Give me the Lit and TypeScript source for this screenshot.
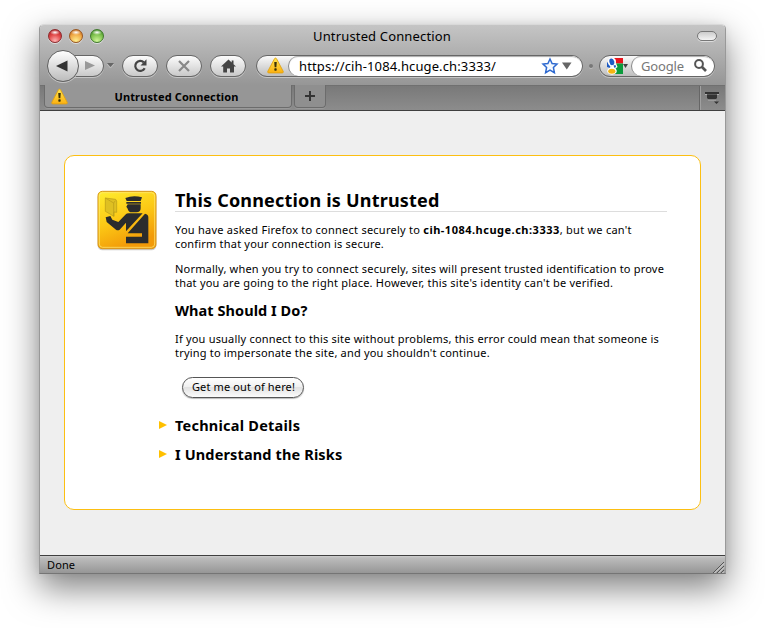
import { LitElement, html, css, svg } from "lit";
import { customElement } from "lit/decorators.js";

const warning = svg`
  <defs><linearGradient id="w" x1="0" y1="0" x2="0" y2="1"><stop offset="0" stop-color="#ffe650"/><stop offset="1" stop-color="#fbb010"/></linearGradient></defs>
  <path d="M8 1 Q8.6 1 9 1.7 L15.2 13.4 Q15.7 15 14.3 15 H1.7 Q.3 15 .8 13.4 L7 1.7 Q7.4 1 8 1Z" fill="url(#w)" stroke="#e0a010" stroke-width=".8"/>
  <path d="M6.800 4.6h2.400l-.4 5h-1.600z" fill="#3a3006"/><rect x="6.900" y="10.700" width="2.200" height="2.200" rx=".6" fill="#3a3006"/>`;

@customElement("app-root")
export class AppRoot extends LitElement {
  static styles = css`
    :host { display: block; width: 765px; height: 628px; background: #fff; overflow: hidden; box-sizing: border-box; padding: 24px 39px 0; font-family: "Noto Sans", "Open Sans", sans-serif; color: #000; }
    * { box-sizing: border-box; }
    svg { display: block; flex: none; overflow: visible; }
    .window { width: 687px; height: 550px; border: 1px solid #999; border-top-color: #d9d9d9; border-bottom-color: #757575; border-radius: 5px 5px 0 0; background: #efefef; display: flex; flex-direction: column; box-shadow: 0 14px 34px rgba(0,0,0,.5), 0 0 8px rgba(0,0,0,.06); }
    .chrome { height: 60px; background: linear-gradient(#c5c5c5, #969696); border-radius: 4px 4px 0 0; flex: none; }
    .title { height: 24px; display: grid; grid-template-columns: 1fr auto 1fr; align-items: center; padding: 0 8px; }
    .lights { display: flex; gap: 7px; margin-top: -2px; }
    .light { width: 14px; height: 14px; border-radius: 50%; border: 1px solid; box-shadow: 0 1px 0 #ddd; }
    .red { background: radial-gradient(ellipse 5px 2.500px at 50% 20%, #fff, transparent), radial-gradient(circle at 50% 90%, #ffb3b3 0, #e34b4b 50%, #b01c22 90%); border-color: #8c2a2d; }
    .amber { background: radial-gradient(ellipse 5px 2.500px at 50% 20%, #fff, transparent), radial-gradient(circle at 50% 90%, #fff090 0, #f0a845 55%, #c0661a 90%); border-color: #99561f; }
    .green { background: radial-gradient(ellipse 5px 2.500px at 50% 20%, #fff, transparent), radial-gradient(circle at 50% 90%, #d0f79a 0, #7cc04c 55%, #3f8a24 90%); border-color: #3f7a2b; }
    .caption { font-size: 13px; line-height: 20px; margin: -3px 0 0 -1px; white-space: nowrap; letter-spacing: .15px; }
    .lozenge { justify-self: end; width: 20px; height: 10px; margin-top: -2px; border: 1px solid #777; border-radius: 5px; background: linear-gradient(#ccc, #f4f4f4); box-shadow: 0 1px 0 #ddd; }
    .toolbar { height: 33px; display: flex; align-items: center; padding-left: 7px; }
    .pill { height: 22px; width: 36px; border: 1px solid #666; border-radius: 11px; background: linear-gradient(#fcfcfc, #c9c9c9); box-shadow: 0 1px 0 #c4c4c4; display: flex; align-items: center; justify-content: center; margin-right: 8px; flex: none; }
    .back { width: 32px; height: 32px; border: 1px solid #606060; border-radius: 50%; background: linear-gradient(#fff, #bcbcbc); box-shadow: 0 1px 0 #c4c4c4; z-index: 1; flex: none; display: flex; align-items: center; justify-content: center; }
    .back svg { margin-right: 3px; }
    .forward { width: 31px; margin: 0 3px 0 -6px; border-radius: 0 11px 11px 0; }
    .forward svg { margin-left: 3px; }
    .drop { margin-right: 8px; }
    .field { height: 22px; border: 1px solid #666; border-radius: 11px; background: linear-gradient(#fafafa, #bdbdbd); display: flex; align-items: center; box-shadow: 0 1px 0 #c4c4c4; flex: none; overflow: hidden; }
    .url { width: 327px; margin-left: 2px; padding-left: 10px; }
    .input { align-self: stretch; flex: 1; background: #fff; border-left: 1px solid #888; border-radius: 11px; display: flex; align-items: center; box-shadow: inset 0 2px 1px -1px #aaa; white-space: nowrap; font-size: 13px; }
    .url .input { margin-left: 4px; padding: 0 10px; }
    .address { flex: 1; letter-spacing: .12px; }
    .arrow { margin-left: 4px; }
    .dot { width: 4px; height: 4px; border-radius: 50%; background: #777; box-shadow: 0 1px #bbb; margin: 0 6px; }
    .search { width: 116px; padding-left: 5px; }
    .search .input { margin-left: 3px; padding: 0 7px 0 9px; justify-content: space-between; color: #777; letter-spacing: -.15px; }
    .tabs { height: 26px; flex: none; background: linear-gradient(#797979, #8c8c8c); border-bottom: 1px solid #3f3f3f; display: flex; padding-left: 4px; align-items: flex-start; border-top: 1px solid #707070; }
    .tab { width: 248px; height: 23px; margin-top: -1px; background: #969696; border: solid #6c6c6c; border-width: 0 1px 1px; border-radius: 0 0 4px 4px; display: flex; align-items: center; padding-left: 6px; box-shadow: 0 1px 0 #999; }
    .label { flex: 1; text-align: center; font-weight: 700; font-size: 11px; padding-right: 6px; white-space: nowrap; letter-spacing: .12px; }
    .plus { width: 32px; margin-left: 2px; justify-content: center; padding: 0; background: #8f8f8f; }
    .list { margin-left: auto; width: 26px; height: 24px; border-left: 1px solid #666; box-shadow: inset 1px 0 #a0a0a0; display: flex; align-items: center; justify-content: center; padding-right: 1px; }
    .page { flex: 1; padding: 44px 24px 0; }
    .card { width: 637px; height: 355px; border: 1px solid #fcbf12; border-radius: 10px; background: #fff; display: flex; padding: 32px 0 0 31px; }
    .text { width: 492px; margin-left: 17px; font-size: 11px; line-height: 14px; }
    h1 { margin: 0 0 11px; height: 24px; border-bottom: 1px solid #ddd; font-size: 18px; line-height: 24px; font-weight: 700; white-space: nowrap; letter-spacing: .19px; }
    h2 { margin: 0; font-size: 14.500px; line-height: 20px; font-weight: 700; white-space: nowrap; letter-spacing: .06px; }
    .technical { letter-spacing: .24px; }
    .risks { letter-spacing: .14px; }
    p { margin: 0 0 11px; }
    .line { display: block; white-space: nowrap; letter-spacing: .195px; }
    .l1 { letter-spacing: .245px; }
    .l1 b { letter-spacing: .5px; }
    .l4 { letter-spacing: .225px; }
    .question { margin-top: -1px; }
    .advice { margin: 12px 0 17px; }
    .escape { font: inherit; width: 122px; height: 21px; margin: 0 0 17px 7px; padding: 0; border: 1px solid #555; border-radius: 11px; background: linear-gradient(#fff 0, #f0f0f0 48%, #e2e2e2 50%, #fbfbfb 100%); box-shadow: 0 1px 1px #bbb; display: flex; justify-content: center; align-items: center; white-space: nowrap; color: #000; letter-spacing: .14px; line-height: 17px; padding: 0 0 2px 1px; }
    .expander { display: flex; align-items: center; margin: 0 0 9px -16px; }
    .expander svg { margin-right: 8px; }
    .status { height: 18px; flex: none; border-top: 1px solid #3f3f3f; background: linear-gradient(#cecece 0, #bcbcbc 2px, #969696); display: flex; align-items: center; justify-content: space-between; padding: 0 1px 0 7px; font-size: 11px; letter-spacing: .1px; }
    .grip { align-self: flex-end; }
  `;

  render() {
    return html`
      <div class="window">
        <div class="chrome">
          <div class="title">
            <div class="lights"><span class="light red"></span><span class="light amber"></span><span class="light green"></span></div>
            <span class="caption">Untrusted Connection</span>
            <span class="lozenge"></span>
          </div>
          <div class="toolbar">
            <div class="back"><svg width="12" height="12"><path d="M0 6 L11.500 .5V11.500Z" fill="#333"/></svg></div>
            <div class="pill forward"><svg width="10" height="9"><path d="M10 4.500 L0 0V9Z" fill="#999"/></svg></div>
            <svg class="drop" width="7" height="5"><path d="M0 0H7L3.500 4Z" fill="#666"/><path d="M0 1 3.500 5 7 1" fill="none" stroke="#ccc" stroke-width=".6"/></svg>
            <div class="pill"><svg width="14" height="14"><path d="M10.800 3.400A5 5 0 1 0 11.700 9.300" fill="none" stroke="#444" stroke-width="2.200"/><path d="M13.500 .3V6.400H7.500Z" fill="#444"/></svg></div>
            <div class="pill"><svg width="12" height="12"><path d="M1 1 11 11M11 1 1 11" stroke="#888" stroke-width="2.200"/></svg></div>
            <div class="pill"><svg width="15" height="14"><path d="M7.500 .5 10.700 3.500V1.500H12.500V5.200L15 7.600H13V13.500H9V9.500H6V13.500H2.200V7.600H0Z" fill="#444"/></svg></div>
            <div class="field url">
              <svg width="17" height="17" viewBox="0 0 16 16">${warning}</svg>
              <div class="input">
                <span class="address">https://cih-1084.hcuge.ch:3333/</span>
                <svg width="16" height="16"><path d="M8 1 10.100 5.500 15 6 11.400 9.400 12.400 14.700 8 12.100 3.600 14.700 4.600 9.400 1 6 5.900 5.500Z" fill="#f4f9ff" stroke="#2f6ad0" stroke-width="1.500"/></svg>
                <svg class="arrow" width="10" height="8"><path d="M0 .5H9.500L4.800 7.500Z" fill="#666"/></svg>
              </div>
            </div>
            <span class="dot"></span>
            <div class="field search">
              <svg width="18" height="18">
                <path d="M9 1H18V6.500H9Z" fill="#e8141c"/><path d="M10 6.500H18V17H10Z" fill="#0b9b3c"/><path d="M2 5 5 8 5 11 2 10Z" fill="#1d5bc4"/>
                <ellipse cx="7" cy="5" rx="4" ry="4.200" fill="#fff"/><path d="M7 7.500 11 6 12.500 10 10 12 6 11Z" fill="#fff"/><ellipse cx="7" cy="14" rx="4.800" ry="3.700" fill="#fff"/>
                <ellipse cx="6.800" cy="4.800" rx="2.400" ry="3.400" fill="#1d5bc4" transform="rotate(-15 6.800 4.800)"/><path d="M8.500 8.500 10.500 8 11 10 9.500 11Z" fill="#1d5bc4"/><ellipse cx="6.800" cy="14.200" rx="3.600" ry="2.500" fill="#f4b512"/>
              </svg>
              <svg width="5" height="4"><path d="M0 0H5L2.500 4Z" fill="#444"/></svg>
              <div class="input"><span>Google</span><svg width="13" height="13"><circle cx="5" cy="5" r="3.900" fill="none" stroke="#555" stroke-width="2"/><path d="M8 8 12 12" stroke="#555" stroke-width="2.600"/></svg></div>
            </div>
          </div>
        </div>
        <div class="tabs">
          <div class="tab"><svg width="17" height="17" viewBox="0 0 16 16">${warning}</svg><span class="label">Untrusted Connection</span></div>
          <div class="tab plus"><svg width="10" height="10"><path d="M0 5H10M5 0V10" stroke="#333" stroke-width="2"/></svg></div>
          <div class="list"><svg width="14" height="12"><path d="M0 1H14" stroke="#333" stroke-width="2"/><path d="M2 2.500H12V6L10.500 7.500H3.500L2 6Z" fill="#333"/><path d="M0 2.500H2M12 2.500H14M3 8H11" stroke="#bbb" stroke-width=".8"/><path d="M9 9.500H14L11.500 12Z" fill="#333"/></svg></div>
        </div>
        <div class="page">
          <div class="card">
            <svg width="62" height="62" viewBox="33 24 186 186">
              <defs><linearGradient id="g" x1="0" y1="0" x2=".4" y2="1"><stop offset="0" stop-color="#ffee30"/><stop offset=".55" stop-color="#fcc815"/><stop offset="1" stop-color="#f29a08"/></linearGradient></defs>
              <rect x="38" y="38" width="176" height="173" rx="14" fill="#ccc"/>
              <rect x="39" y="34" width="174" height="172" rx="13" fill="url(#g)" stroke="#d8961c" stroke-width="3"/>
              <rect x="43" y="38" width="166" height="164" rx="10" fill="none" stroke="#ffe878" stroke-width="3" opacity=".7"/>
              <path d="M61 54 92 58 95 63V97L87 96V109L61 94ZM61 54 86 69V109M86 69 91 62" fill="#dfc022" stroke="#b89a18" stroke-width="2"/>
              <g fill="#2b2c2d"><path d="M121 54Q145 44 171 52L167 63H125ZM124 66H168V71H124Z"/><path d="M128 73H167V85Q167 97 154 97H141Q130 97 128 86L124 80Z"/><path d="M62 112 76 108 82 119 100 126 121 104Q125 100 132 100H173L123 154V128L104 149Q98 153 93 149L65 126Z"/><path d="M180 101Q190 103 190 112V190H123V170H171V160H128Z"/></g>
            </svg>
            <div class="text">
              <h1>This Connection is Untrusted</h1>
              <p><span class="line l1">You have asked Firefox to connect securely to <b>cih-1084.hcuge.ch:3333</b>, but we can't</span><span class="line">confirm that your connection is secure.</span></p>
              <p><span class="line">Normally, when you try to connect securely, sites will present trusted identification to prove</span><span class="line l4">that you are going to the right place. However, this site's identity can't be verified.</span></p>
              <h2 class="question">What Should I Do?</h2>
              <p class="advice"><span class="line">If you usually connect to this site without problems, this error could mean that someone is</span><span class="line">trying to impersonate the site, and you shouldn't continue.</span></p>
              <button class="escape">Get me out of here!</button>
              <div class="expander"><svg width="8" height="8"><path d="M0 0 8 4 0 8Z" fill="#ffc000"/></svg><h2 class="technical">Technical Details</h2></div>
              <div class="expander"><svg width="8" height="8"><path d="M0 0 8 4 0 8Z" fill="#ffc000"/></svg><h2 class="risks">I Understand the Risks</h2></div>
            </div>
          </div>
        </div>
        <div class="status"><span>Done</span><svg class="grip" width="12" height="12"><path d="M1 12 12 1M5 12 12 5M9 12 12 9" stroke="#555"/><path d="M2.500 12 12 2.500M6.500 12 12 6.500M10.500 12 12 10.500" stroke="#ddd"/></svg></div>
      </div>`;
  }
}
